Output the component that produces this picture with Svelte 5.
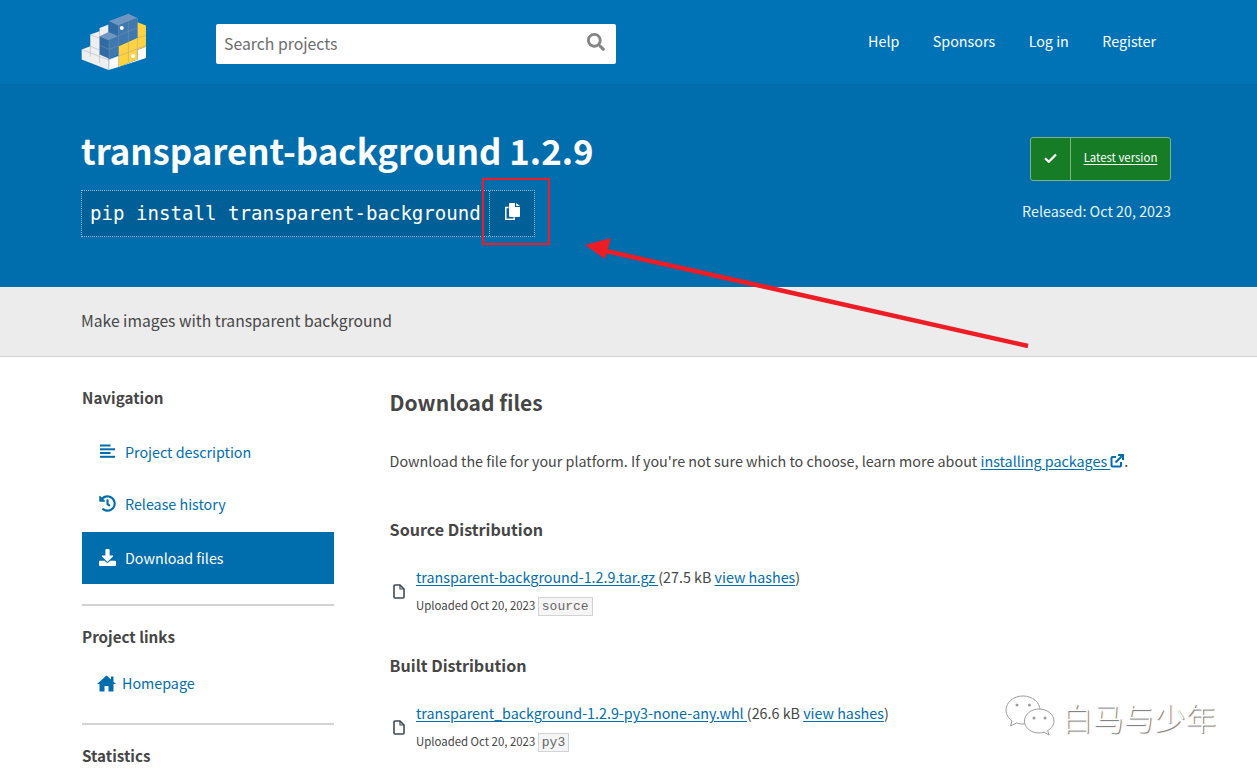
<script>
  const nav = [
    { label: "Project description", icon: "lines" },
    { label: "Release history", icon: "history" },
    { label: "Download files", icon: "download", active: true }
  ];

  const headerLinks = ["Help", "Sponsors", "Log in", "Register"];

  const dists = [
    {
      title: "Source Distribution",
      file: "transparent-background-1.2.9.tar.gz",
      size: "27.5 kB",
      tag: "source"
    },
    {
      title: "Built Distribution",
      file: "transparent_background-1.2.9-py3-none-any.whl",
      size: "26.6 kB",
      tag: "py3"
    }
  ];
</script>

<div class="page">
  <header class="top">
    <div class="wrap top-row">
      <svg class="logo" viewBox="63 40 200 175" aria-label="PyPI">
        <polygon fill="#efefef" points="64,150 90,140 90,105 118,95 118,85 145,75 145,212 64,180" />
        <polygon fill="#ffffff" points="145,212 145,180 178,168 178,202" />
        <polygon fill="#ffffff" points="178,202 232,180 232,152 258,142 258,176" />
        <polygon fill="#ffd242" points="175,140 232,115 232,68 258,78 258,142 232,152 232,180 175,203" />
        <polygon fill="#6f96c0" points="145,65 205,42 232,55 175,78" />
        <polygon fill="#2f6ca6" points="145,65 175,78 175,135 145,122" />
        <polygon fill="#3f78ae" points="175,78 232,55 232,115 175,140" />
        <polygon fill="#6f96c0" points="118,110 145,97 175,110 147,122" />
        <polygon fill="#2f6ca6" points="118,110 147,122 147,178 118,165" />
        <polygon fill="#3f78ae" points="147,122 175,110 175,165 147,178" />
        <g fill="none" stroke="#8d9bab" stroke-width="1.6" opacity="0.75">
          <path d="M64 150 L145 182 L175 170 M90 140 L118 152 M90 140 V172 M118 95 L118 190 M90 105 L118 117" />
          <path d="M175 78 V203 M205 42 L205 67 V190 M147 122 V212 M175 108 L232 85 M175 170 L258 138 M232 55 V180 M118 138 L147 150 L175 138 M232 115 L258 108" />
          <path d="M160 71 L190 85" />
        </g>
        <circle cx="185" cy="85" r="6" fill="#fff" />
        <circle cx="219" cy="170" r="6" fill="#fff" />
      </svg>

      <form class="search" on:submit|preventDefault>
        <input type="text" placeholder="Search projects" />
        <svg class="search-icon" viewBox="0 0 512 512"><path d="M505 442.7L405.3 343c-4.5-4.5-10.6-7-17-7H372c27.6-35.3 44-79.7 44-128C416 93.1 322.9 0 208 0S0 93.1 0 208s93.1 208 208 208c48.3 0 92.7-16.4 128-44v16.3c0 6.4 2.5 12.5 7 17l99.7 99.7c9.4 9.4 24.6 9.4 33.9 0l28.3-28.3c9.4-9.4 9.4-24.6.1-34zM208 336c-70.7 0-128-57.2-128-128 0-70.7 57.2-128 128-128 70.7 0 128 57.2 128 128 0 70.7-57.2 128-128 128z" /></svg>
      </form>

      <nav class="top-links">
        {#each headerLinks as link}
          <a href="#top">{link}</a>
        {/each}
      </nav>
    </div>
  </header>

  <section class="banner">
    <div class="wrap banner-row">
      <div>
        <h1>transparent-background 1.2.9</h1>
        <div class="pip">
          <span class="pip-cmd">pip install transparent-background</span>
          <button class="copy" aria-label="Copy">
            <svg viewBox="0 0 15 17" width="15" height="17">
              <path d="M3.500 4.500H.8v11.700h8.400v-2" fill="none" stroke="#fff" stroke-width="1.500" />
              <path d="M4 1a1 1 0 0 1 1-1h5v4h5v9a1 1 0 0 1-1 1H5a1 1 0 0 1-1-1zM11.200 0L15 3h-3.800z" fill="#fff" />
            </svg>
          </button>
        </div>
      </div>
      <div class="release">
        <div class="latest">
          <span class="latest-icon">
            <svg viewBox="0 0 13 10" width="13" height="10"><path d="M1 5.200L4.800 8.800L12 1.400" fill="none" stroke="#fff" stroke-width="2.200" /></svg>
          </span>
          <a href="#top">Latest version</a>
        </div>
        <p>Released: Oct 20, 2023</p>
      </div>
    </div>
  </section>

  <section class="summary">
    <div class="wrap">Make images with transparent background</div>
  </section>

  <div class="wrap content">
    <aside class="side">
      <h3 class="side-title">Navigation</h3>
      <ul class="side-nav">
        {#each nav as item}
          <li class:active={item.active}>
            <span class="slot">
              {#if item.icon === "lines"}
                <svg viewBox="0 0 15 14" width="15" height="14" fill="currentColor">
                  <rect x="0" y="0.5" width="10.5" height="2" />
                  <rect x="0" y="4.3" width="15" height="2" />
                  <rect x="0" y="8" width="10.5" height="2" />
                  <rect x="0" y="11.8" width="15" height="2" />
                </svg>
              {:else if item.icon === "history"}
                <svg viewBox="0 0 512 512" width="17" height="17" fill="currentColor"><path d="M504 255.531c.253 136.64-111.18 248.372-247.82 248.468-59.015.042-113.223-20.53-155.822-54.911-11.077-8.94-11.905-25.541-1.839-35.607l11.267-11.267c8.609-8.609 22.353-9.551 31.891-1.984C173.062 425.135 212.781 440 256 440c101.705 0 184-82.311 184-184 0-101.705-82.311-184-184-184-48.814 0-93.149 18.969-126.068 49.932l50.754 50.754c10.08 10.08 2.941 27.314-11.313 27.314H24c-8.837 0-16-7.163-16-16V38.627c0-14.254 17.234-21.393 27.314-11.314l49.372 49.372C129.209 34.136 189.552 8 256 8c136.81 0 247.747 110.78 248 247.531zm-180.912 78.784l9.823-12.63c8.138-10.463 6.253-25.542-4.21-33.679L288 256.349V152c0-13.255-10.745-24-24-24h-16c-13.255 0-24 10.745-24 24v135.651l65.409 50.874c10.463 8.137 25.541 6.253 33.679-4.21z" /></svg>
              {:else}
                <svg viewBox="0 0 512 512" width="17" height="17" fill="currentColor"><path d="M216 0h80c13.3 0 24 10.7 24 24v168h87.7c17.8 0 26.7 21.5 14.1 34.1L269.7 378.3c-7.5 7.5-19.8 7.5-27.3 0L90.1 226.1c-12.6-12.6-3.7-34.1 14.1-34.1H192V24c0-13.3 10.7-24 24-24zm296 376v112c0 13.3-10.7 24-24 24H24c-13.3 0-24-10.7-24-24V376c0-13.3 10.7-24 24-24h146.7l49 49c20.1 20.1 52.5 20.1 72.6 0l49-49H488c13.3 0 24 10.7 24 24z" /></svg>
              {/if}
            </span>
            <span>{item.label}</span>
          </li>
        {/each}
      </ul>
      <hr />
      <h3 class="side-title">Project links</h3>
      <a class="home" href="#top">
        <svg viewBox="0 0 19 17" width="19" height="17" fill="currentColor">
          <path d="M9.500.5L19 9h-2.500v7.500h-5V11h-4v5.500h-5V9H0z" />
          <rect x="14" y="1.500" width="2.500" height="5" />
        </svg>
        <span>Homepage</span>
      </a>
      <hr class="second" />
      <h3 class="side-title">Statistics</h3>
    </aside>

    <main class="main">
      <h2>Download files</h2>
      <p class="intro">
        Download the file for your platform. If you're not sure which to choose, learn more about
        <a href="#top">installing packages
          <svg class="ext" viewBox="0 0 14 14" width="14" height="14" fill="none" stroke="currentColor" stroke-width="2">
            <path d="M11 8v3.500a1 1 0 0 1-1 1H2.500a1 1 0 0 1-1-1V4a1 1 0 0 1 1-1H6" />
            <path d="M5.500 8.500L12 2M8 1h5v5" />
          </svg></a>.
      </p>

      {#each dists as d}
        <h3 class="dist-title">{d.title}</h3>
        <div class="file">
          <svg class="file-icon" viewBox="0 0 12 15" width="12" height="15" fill="none" stroke="#3c4a57" stroke-width="1.6">
            <path d="M1 2a1 1 0 0 1 1-1h5l4 4v8a1 1 0 0 1-1 1H2a1 1 0 0 1-1-1z" />
            <path d="M7 1v4h4" stroke-width="1.2" />
          </svg>
          <div>
            <div class="file-line">
              <a href="#top">{d.file + " "}</a>({d.size} <a href="#top">view hashes</a>)
            </div>
            <div class="file-meta">Uploaded Oct 20, 2023 <code>{d.tag}</code></div>
          </div>
        </div>
      {/each}
    </main>
  </div>

  <!-- annotation drawn over the page -->
  <div class="mark-box"></div>
  <svg class="mark-arrow" viewBox="0 0 1257 774" width="1257" height="774">
    <line x1="1028" y1="346" x2="606" y2="251" stroke="#ee1c25" stroke-width="4.5" />
    <polygon points="585,245 611,238 605,259" fill="#ee1c25" />
  </svg>

  <div class="watermark">
    <svg viewBox="0 0 50 44" width="50" height="44" fill="#fff" stroke="#9c9c9c" stroke-width="1">
      <path d="M18 1C8.500 1 1 7.500 1 15c0 4.500 2.500 8.500 6 11l-1.500 5 6-3c2 .7 4.300 1 6.500 1 9.500 0 17-6.500 17-14S27.500 1 18 1z" />
      <path d="M34 14c-8 0-14.500 5.300-14.500 12S26 38 34 38c1.800 0 3.500-.3 5-.8l5 2.800-1.300-4.500C46.500 33.500 49 30 49 26c0-6.700-7-12-15-12z" />
      <g fill="#9c9c9c" stroke="none">
        <circle cx="12" cy="10" r="1.500" /><circle cx="24.500" cy="10" r="1.500" />
        <circle cx="29" cy="23" r="1.500" /><circle cx="40" cy="23" r="1.500" />
      </g>
    </svg>
    <span>白马与少年</span>
  </div>
</div>

<style>
  :global(body) {
    margin: 0;
    background: #fff;
    overflow: hidden;
  }

  .page {
    position: relative;
    height: 774px;
    overflow: hidden;
    font-family: "Noto Sans CJK SC", "Noto Sans", sans-serif;
    font-size: 14.3px;
    color: #464646;
  }

  .wrap {
    width: 1090px;
    margin-left: 81px;
  }

  a {
    color: #006dad;
    text-underline-offset: 2px;
  }

  /* header */
  .top {
    height: 84px;
    background: #0073b7;
    border-bottom: 1px solid #006ba9;
  }

  .top-row {
    display: flex;
    align-items: center;
    height: 84px;
  }

  .logo {
    width: 67px;
    height: 58px;
    flex: none;
  }

  .search {
    position: relative;
    margin-left: 68px;
    margin-top: 4px;
    width: 400px;
    height: 40px;
    display: flex;
  }

  .search input {
    flex: 1;
    min-width: 0;
    border: 0;
    border-radius: 2px;
    padding: 0 8px 2px;
    font: inherit;
    font-size: 15.8px;
    color: #464646;
    background: #fff;
  }

  .search input::placeholder {
    color: #6d6d6d;
    opacity: 1;
  }

  .search-icon {
    position: absolute;
    right: 11px;
    top: 9px;
    width: 18px;
    height: 18px;
    fill: #858585;
  }

  .top-links {
    margin-left: auto;
    margin-right: 15px;
    margin-bottom: 4px;
    display: flex;
    gap: 33.5px;
  }

  .top-links a {
    color: #fff;
    text-decoration: none;
    font-size: 14.3px;
  }

  /* banner */
  .banner {
    height: 202px;
    background: #006dad;
  }

  .banner-row {
    display: flex;
    justify-content: space-between;
  }

  h1 {
    margin: 0;
    padding-top: 40px;
    color: #fff;
    font-size: 34.8px;
    line-height: 50px;
    font-weight: 700;
  }

  .pip {
    display: inline-flex;
    margin-top: 15px;
    height: 47px;
    background: #005f96;
    border: 1px dotted #8fbcd9;
    box-sizing: border-box;
    align-items: stretch;
  }

  .pip-cmd {
    width: 407px;
    padding-left: 8px;
    box-sizing: border-box;
    font-family: "DejaVu Sans Mono", monospace;
    font-size: 19.1px;
    line-height: 46px;
    white-space: nowrap;
    color: #fff;
  }

  .copy {
    width: 45px;
    border: 0;
    border-left: 1px dotted #8fbcd9;
    background: transparent;
    padding: 0 0 4px;
    display: flex;
    align-items: center;
    justify-content: center;
  }

  .release {
    display: flex;
    flex-direction: column;
    align-items: flex-end;
    padding-top: 52px;
  }

  .latest {
    display: flex;
    align-items: stretch;
    width: 141px;
    height: 44px;
    box-sizing: border-box;
    background: #167c26;
    border: 1px solid #7fb285;
    border-radius: 3px;
    font-size: 11.4px;
  }

  .latest-icon {
    width: 39px;
    padding-bottom: 3px;
    box-sizing: content-box;
    border-right: 1px solid #7fb285;
    display: flex;
    align-items: center;
    justify-content: center;
  }

  .latest a {
    flex: 1;
    text-align: center;
    line-height: 39px;
    color: #fff;
  }

  .release p {
    margin: 20px 0 0;
    font-size: 14.35px;
    line-height: 20px;
    color: #e9f2f8;
  }

  /* summary strip */
  .summary {
    height: 69px;
    background: #ececec;
    border-bottom: 1px solid #d3d3d3;
    line-height: 68px;
    font-size: 15.7px;
  }

  /* body */
  .content {
    display: flex;
  }

  .side {
    width: 252px;
    margin-left: 1px;
    flex: none;
  }

  .side-title {
    margin: 0;
    font-size: 15.2px;
    line-height: 24px;
    font-weight: 600;
    color: #464646;
  }

  .side > .side-title:first-child {
    margin-top: 28px;
  }

  .side-nav {
    list-style: none;
    margin: 17px 0 0;
    padding: 0;
  }

  .side-nav li {
    display: flex;
    align-items: center;
    gap: 9px;
    height: 52px;
    box-sizing: border-box;
    padding: 0 0 2px 16px;
    color: #006dad;
  }

  .slot {
    width: 18px;
    flex: none;
    display: flex;
    justify-content: center;
  }

  .side-nav li.active {
    margin-top: 2px;
    background: #006dad;
    color: #fff;
  }

  hr {
    border: 0;
    height: 2px;
    margin: 20px 0 18px;
    background: #d3d3d3;
  }

  hr.second {
    margin: 28px 0 18px;
  }

  .home {
    display: flex;
    align-items: center;
    gap: 6px;
    margin: 23px 0 0 15px;
    line-height: 24px;
    text-decoration: none;
  }

  .main {
    margin-left: 55.6px;
    flex: 1;
  }

  h2 {
    margin: 27px 0 0;
    font-size: 21px;
    line-height: 36px;
    font-weight: 600;
    color: #464646;
  }

  .intro {
    margin: 29px 0 0;
    font-size: 14.33px;
    line-height: 24px;
    color: #464646;
  }

  .intro a {
    white-space: nowrap;
  }

  .ext {
    vertical-align: -1px;
  }

  .dist-title {
    margin: 44px 0 0;
    font-size: 16.1px;
    line-height: 24px;
    font-weight: 600;
    color: #464646;
  }

  .file + .dist-title {
    margin-top: 36px;
  }

  .file {
    display: flex;
    align-items: center;
    gap: 11.4px;
    margin-top: 24px;
    margin-left: 3px;
  }

  .file-line {
    line-height: 24px;
  }

  .file-meta {
    margin-top: 6px;
    font-size: 11.4px;
    line-height: 20px;
  }

  code {
    font-family: "Liberation Mono", monospace;
    font-size: 13px;
    background: #f5f5f5;
    border: 1px solid #d3d3d3;
    padding: 1px 3px;
    color: #666;
  }

  /* annotation + watermark */
  .mark-box {
    position: absolute;
    left: 482px;
    top: 178px;
    width: 68px;
    height: 67px;
    box-sizing: border-box;
    border: 2px solid #ee1c25;
  }

  .mark-arrow {
    position: absolute;
    left: 0;
    top: 0;
    pointer-events: none;
  }

  .watermark {
    position: absolute;
    left: 1005px;
    top: 695px;
    display: flex;
    align-items: center;
    gap: 7px;
    color: #fff;
  }

  .watermark span {
    font-size: 30.5px;
    letter-spacing: 0.4px;
    line-height: 44px;
    font-weight: 300;
    color: #fdfdfd;
    text-shadow: 1px 1px 1px #6f6f6f;
    white-space: nowrap;
  }
</style>
